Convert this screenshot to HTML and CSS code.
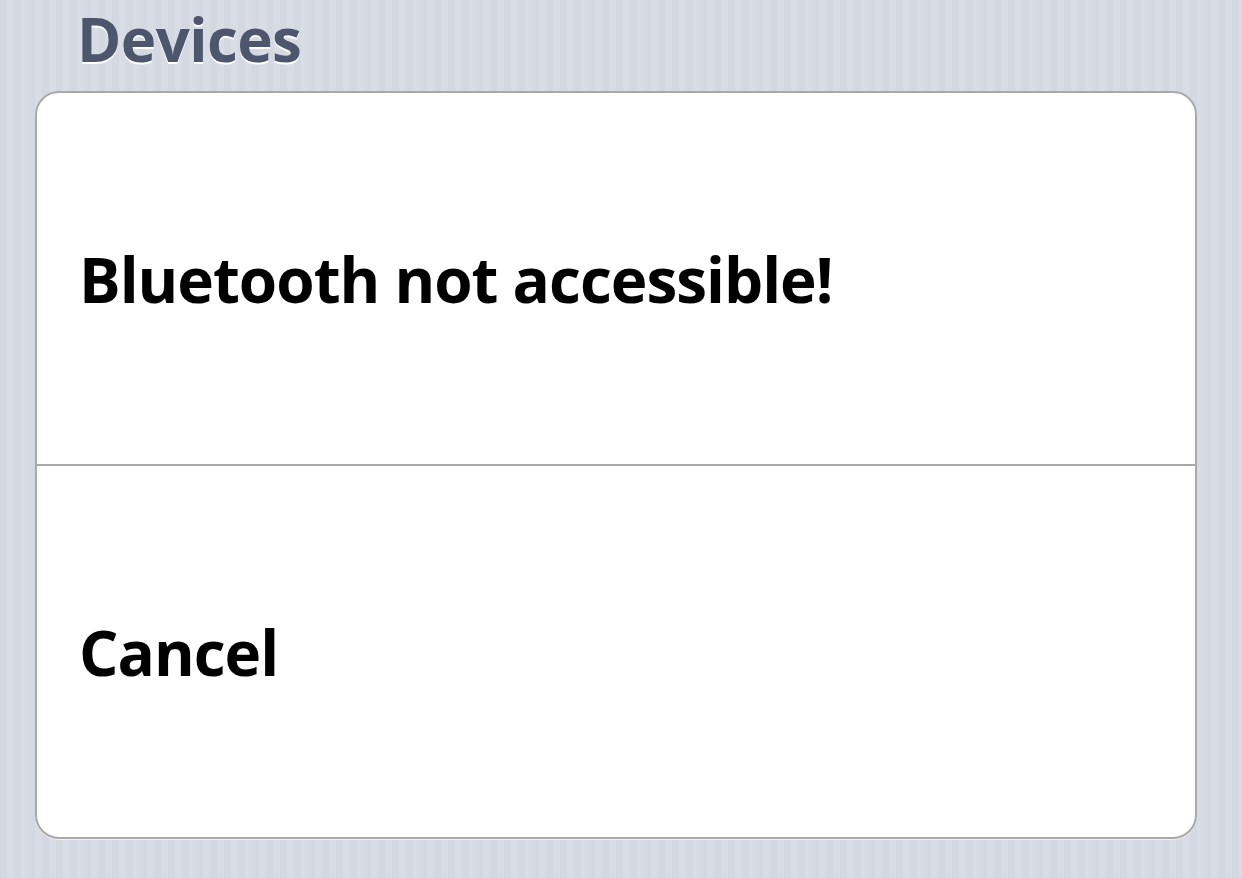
FILE: index.html
```html
<!DOCTYPE html>
<html lang="en">
<head>
  <meta charset="UTF-8" />
  <meta name="viewport" content="width=device-width, initial-scale=1.0"/>
  <title>Devices</title>
  <link rel="stylesheet" href="styles.css">
</head>
<body>

  <h1 class="section-title">Devices</h1>

  <div class="group">
    <div class="row">Bluetooth not accessible!</div>
    <div class="row">Cancel</div>
  </div>

</body>
</html>
```

FILE: styles.css
```css
body {
  margin: 0; height: 878px; overflow: hidden;
  font-family: "Open Sans", "DejaVu Sans", sans-serif;
  background-color: #d3d8e1;
  background-image: repeating-linear-gradient(90deg, #d3d8e1 0, #d3d8e1 7px, #d8dde5 7px, #d8dde5 14px);
  padding: 0 45px 0 35px;
}
.section-title {
  margin: 0; height: 91px; padding-left: 42px;
  font-size: 60px; font-weight: 700; line-height: 78px; letter-spacing: -0.6px;
  color: #4d566c; text-shadow: 0 2px 0 #fff;
}
.group {
  background: #fff; border: 2px solid #a9a9a9; border-radius: 24px;
  box-shadow: 0 1px 0 #eef0f4;
}
.row {
  height: 371px; display: flex; align-items: center;
  padding-left: 42px; font-size: 62px; font-weight: 700; letter-spacing: -1px; color: #000;
}
.row + .row { border-top: 2px solid #a9a9a9; }
```
